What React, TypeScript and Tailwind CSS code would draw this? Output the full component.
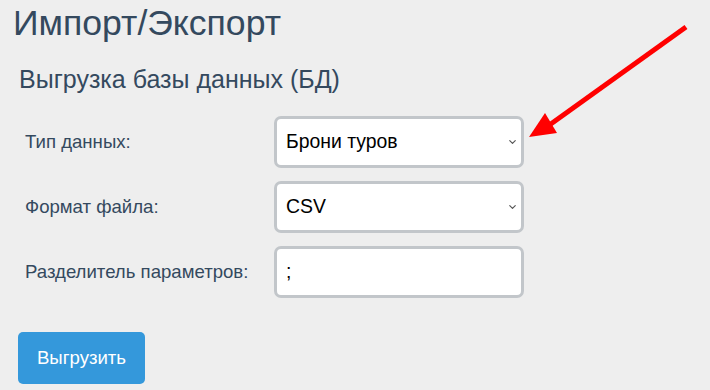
import { ChevronDown } from 'lucide-react'

const rows = [
  { label: 'Тип данных:', value: 'Брони туров', select: true },
  { label: 'Формат файла:', value: 'CSV', select: true },
  { label: 'Разделитель параметров:', value: ';', select: false },
]

export default function App() {
  return (
    <div className="relative w-[710px] h-[390px] overflow-hidden bg-[#eeeeee] text-[#34495e] font-['Liberation_Sans',Arial,sans-serif]">
      <div className="pl-[13px] pt-[3px]">
        <h1 className="text-[35.6px] leading-[41px]">Импорт/Экспорт</h1>
        <h2 className="mt-[20px] ml-[6px] text-[25px] leading-[30px]">Выгрузка базы данных (БД)</h2>

        {/* Form */}
        <div className="mt-[22px] ml-[12px] flex flex-col gap-[13px]">
          {rows.map((row) => (
            <div key={row.label} className="flex items-center">
              <label className="w-[249px] text-[18.6px]">{row.label}</label>
              <div className="relative w-[250px] h-[52px] bg-white border-[3px] border-[#c2c6ca] rounded-[7px] flex items-center pl-[9px]">
                <span className="text-[19.4px] text-black">{row.value}</span>
                {row.select && (
                  <ChevronDown className="absolute right-[3px] top-1/2 -translate-y-1/2 w-[11px] h-[11px] text-[#555]" strokeWidth={2.5} />
                )}
              </div>
            </div>
          ))}
        </div>

        <button className="mt-[34px] ml-[5px] w-[127px] h-[52px] bg-[#3498db] rounded-[5px] text-white text-[18.6px]">
          Выгрузить
        </button>
      </div>

      {/* Red arrow */}
      <svg className="absolute left-0 top-0" width="710" height="390" viewBox="0 0 710 390">
        <line x1="686" y1="27" x2="548" y2="126" stroke="#ff0000" strokeWidth="5" />
        <polygon points="529,137 545,113 557,133" fill="#ff0000" />
      </svg>
    </div>
  )
}
